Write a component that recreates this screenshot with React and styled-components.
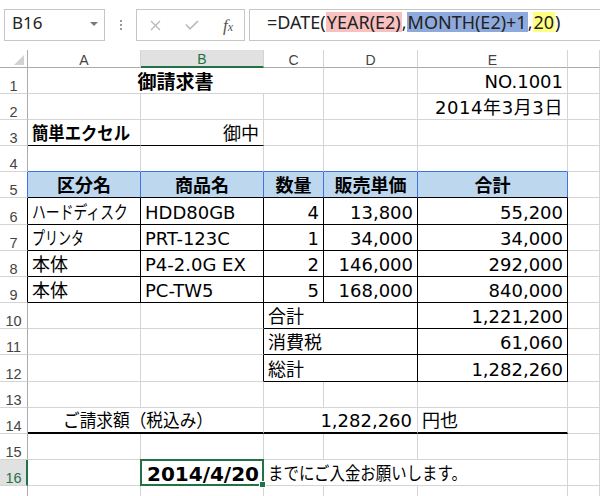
import React, { useLayoutEffect, useRef, useState } from 'react';
import styled, { createGlobalStyle } from 'styled-components';

const GRID = '#d4d4d4';
const BLK = '#000';
const BLUE = '#3f72e6';
const GREEN = '#217346';
const HEADLINE = '#ababab';

const Global = createGlobalStyle`
  html, body { margin: 0; padding: 0; background: #fff; }
  body { width: 600px; height: 496px; overflow: hidden; }
`;

const Page = styled.div`
  width: 600px;
  height: 496px;
  overflow: hidden;
  background: #fff;
`;

const FormulaBar = styled.div`
  display: flex;
  align-items: flex-start;
  height: 50px;
  box-sizing: border-box;
  padding: 9px 0 0 4px;
  font-family: "Noto Sans", sans-serif;
  color: #222;
`;

const NameBox = styled.div`
  width: 101px;
  height: 32px;
  box-sizing: border-box;
  border: 1px solid #c6c6c6;
  display: flex;
  align-items: flex-start;
  justify-content: space-between;
  padding: 2.5px 6px 0 7px;
  font-size: 17px;
  line-height: 20px;
`;

const Caret = styled.span`
  width: 0;
  height: 0;
  margin-top: 9px;
  border-left: 4px solid transparent;
  border-right: 4px solid transparent;
  border-top: 4px solid #7a7a7a;
`;

const Grip = styled.div`
  width: 31px;
  height: 32px;
  display: flex;
  flex-direction: column;
  align-items: center;
  justify-content: center;
  gap: 2px;
`;

const Dot = styled.span`
  width: 2px;
  height: 2px;
  background: #9a9a9a;
`;

const FxBox = styled.div`
  width: 109px;
  height: 32px;
  box-sizing: border-box;
  border: 1px solid #c6c6c6;
  display: flex;
  align-items: center;
  justify-content: space-between;
  padding: 0 11px 0 13px;
`;

const FxText = styled.span`
  font-family: "Liberation Serif", serif;
  font-style: italic;
  font-size: 17px;
  color: #555;
  line-height: 1;
  & > small {
    font-size: 12px;
  }
`;

const FormulaInput = styled.div`
  flex: 1;
  margin-left: 4px;
  height: 32px;
  box-sizing: border-box;
  border: 1px solid #c6c6c6;
  border-right: none;
  padding: 1.5px 0 0 17px;
  font-size: 18px;
  line-height: 20px;
  white-space: nowrap;
`;

const Ref = styled.span`
  display: inline-block;
  line-height: 20px;
  padding: 0 1px;
  background: ${(p) => p.$c};
`;

const Sheet = styled.div`
  display: grid;
  grid-template-columns: 28px 113px 123px 60px 94px 150px 32px;
  grid-template-rows: 17.5px repeat(17, 26.18px);
  font-family: "DejaVu Sans", "Noto Sans CJK JP", sans-serif;
`;

const Corner = styled.div`
  box-sizing: border-box;
  border-right: 1px solid ${HEADLINE};
  border-bottom: 1px solid ${HEADLINE};
  display: flex;
  align-items: flex-end;
  justify-content: flex-end;
  padding: 0 3px 2px 0;
`;

const ColHead = styled.div`
  box-sizing: border-box;
  border-right: 1px solid ${GRID};
  border-bottom: ${(p) => (p.$sel ? `2px solid ${GREEN}` : `1px solid ${HEADLINE}`)};
  background: ${(p) => (p.$sel ? '#e1e1e1' : '#fff')};
  color: ${(p) => (p.$sel ? GREEN : '#444')};
  display: flex;
  align-items: flex-end;
  justify-content: center;
  font-family: "Liberation Sans", sans-serif;
  font-size: 14px;
  line-height: ${(p) => (p.$sel ? 14 : 13)}px;
`;

const RowHead = styled.div`
  box-sizing: border-box;
  border-right: ${(p) => (p.$sel ? `2px solid ${GREEN}` : `1px solid ${p.$rc || HEADLINE}`)};
  border-bottom: 1px solid ${GRID};
  background: ${(p) => (p.$sel ? '#e1e1e1' : '#fff')};
  color: ${(p) => (p.$sel ? GREEN : '#444')};
  display: flex;
  align-items: flex-end;
  justify-content: center;
  padding-left: ${(p) => (p.$sel ? 1 : 0)}px;
  font-family: "Liberation Sans", sans-serif;
  font-size: 14.5px;
  line-height: 13px;
`;

const Cell = styled.div`
  grid-column: span ${(p) => p.$span || 1};
  position: relative;
  box-sizing: border-box;
  border-right: 1px solid ${(p) => p.$r || GRID};
  border-bottom: ${(p) => p.$bw || 1}px solid ${(p) => p.$b || GRID};
  background: ${(p) => p.$bg || '#fff'};
  display: flex;
  align-items: flex-end;
  justify-content: ${(p) => (p.$align === 'right' ? 'flex-end' : p.$align === 'center' ? 'center' : 'flex-start')};
  padding: 0 ${(p) => p.$pr ?? 4}px 0 ${(p) => p.$pl ?? 4}px;
  font-size: ${(p) => p.$fs || 18}px;
  font-weight: ${(p) => (p.$bold ? 700 : 400)};
  line-height: 22px;
  white-space: nowrap;
  color: #000;
`;

const Txt = styled.span`
  display: inline-block;
  flex: none;
  letter-spacing: ${(p) => p.$ls || 0}px;
  transform-origin: left bottom;
`;

const Selection = styled.div`
  position: absolute;
  inset: -1px;
  border: 2px solid ${GREEN};
  pointer-events: none;
  z-index: 2;
`;

const FillHandle = styled.div`
  position: absolute;
  right: -4px;
  bottom: -4px;
  width: 5px;
  height: 5px;
  background: ${GREEN};
  border: 1px solid #fff;
  z-index: 3;
`;

function CellText({ text, fit, ls }) {
  const ref = useRef(null);
  const [scale, setScale] = useState(1);
  useLayoutEffect(() => {
    if (!fit || !ref.current) return;
    const w = ref.current.offsetWidth;
    if (w > 0) setScale(fit / w);
  }, [fit, text]);
  return (
    <Txt
      ref={ref}
      $ls={ls}
      style={fit ? { transform: `scaleX(${scale})` } : undefined}
    >
      {text}
    </Txt>
  );
}

const COLS = ['A', 'B', 'C', 'D', 'E', ''];

const blank = (n) => Array.from({ length: n }, () => ({}));

const dataRow = (a, fit, b, c, d, e) => [
  { text: a, r: BLK, b: BLK, fit },
  { text: b, r: BLK, b: BLK },
  { text: c, r: BLK, b: BLK, align: 'right' },
  { text: d, r: BLK, b: BLK, align: 'right' },
  { text: e, r: BLK, b: BLK, align: 'right' },
  {},
];

const sumRow = (label, value) => [
  {},
  { r: BLK },
  { span: 2, text: label, r: BLK, b: BLK },
  { text: value, r: BLK, b: BLK, align: 'right' },
  {},
];

const ROWS = [
  { cells: [{ span: 3, text: '御請求書', align: 'center', bold: true, fs: 19 }, {}, { text: 'NO.1001', align: 'right' }, {}] },
  { cells: [{}, {}, {}, {}, { text: '2014年3月3日', align: 'right', ls: 0.6 }, {}] },
  {
    cells: [
      { text: '簡単エクセル', bold: true, b: BLK, fit: 98 },
      { text: '御中', align: 'right', b: BLK },
      {}, {}, {}, {},
    ],
  },
  { cells: [{ b: BLUE }, { b: BLUE }, { b: BLUE }, { b: BLUE }, { b: BLUE }, {}] },
  {
    rc: BLUE,
    cells: [
      ...['区分名', '商品名', '数量', '販売単価', '合計'].map((t) => ({
        text: t, bold: true, align: 'center', bg: '#bdd7ee', r: BLUE, b: BLK, pl: 0, pr: 0,
      })),
      {},
    ],
  },
  { rc: BLK, cells: dataRow('ハードディスク', 96, 'HDD80GB', '4', '13,800', '55,200') },
  { rc: BLK, cells: dataRow('プリンタ', 52, 'PRT-123C', '1', '34,000', '34,000') },
  { rc: BLK, cells: dataRow('本体', 0, 'P4-2.0G EX', '2', '146,000', '292,000') },
  { rc: BLK, cells: dataRow('本体', 0, 'PC-TW5', '5', '168,000', '840,000') },
  { cells: sumRow('合計', '1,221,200') },
  { cells: sumRow('消費税', '61,060') },
  { cells: sumRow('総計', '1,282,260') },
  { cells: blank(6) },
  {
    cells: [
      { span: 2, text: 'ご請求額（税込み）', pl: 35, b: BLK, bw: 2, fit: 150 },
      { span: 2, text: '1,282,260', align: 'right', pr: 5, b: BLK, bw: 2 },
      { text: '円也', b: BLK, bw: 2 },
      {},
    ],
  },
  { cells: blank(6) },
  {
    sel: true,
    cells: [
      {},
      { text: '2014/4/20', bold: true, align: 'right', fs: 20, sel: true },
      { span: 3, text: 'までにご入金お願いします。', fit: 199 },
      {},
    ],
  },
  { cells: blank(6) },
];

function XIcon() {
  return (
    <svg width="11" height="11" viewBox="0 0 11 11">
      <path d="M1 1 L10 10 M10 1 L1 10" stroke="#b8b8b8" strokeWidth="1.3" fill="none" />
    </svg>
  );
}

function CheckIcon() {
  return (
    <svg width="14" height="10" viewBox="0 0 14 10">
      <path d="M1 4.5 L5 8.8 L13 1" stroke="#b8b8b8" strokeWidth="1.6" fill="none" />
    </svg>
  );
}

function CornerTriangle() {
  return (
    <svg width="10" height="10" viewBox="0 0 10 10">
      <path d="M10 0 L10 10 L0 10 Z" fill="#d2d2d2" />
    </svg>
  );
}

export default function App() {
  return (
    <Page>
      <Global />
      <FormulaBar>
        <NameBox>
          <span>B16</span>
          <Caret />
        </NameBox>
        <Grip>
          <Dot />
          <Dot />
          <Dot />
        </Grip>
        <FxBox>
          <XIcon />
          <CheckIcon />
          <FxText>
            f<small>x</small>
          </FxText>
        </FxBox>
        <FormulaInput>
          =DATE(<Ref $c="#f9c0c0">YEAR(E2)</Ref>,<Ref $c="#8eaadc">MONTH(E2)+1</Ref>,<Ref $c="#ffff80">20</Ref>)
        </FormulaInput>
      </FormulaBar>
      <Sheet>
        <Corner>
          <CornerTriangle />
        </Corner>
        {COLS.map((c, i) => (
          <ColHead key={i} $sel={c === 'B'}>
            {c}
          </ColHead>
        ))}
        {ROWS.map((row, ri) => (
          <React.Fragment key={ri}>
            <RowHead $rc={row.rc} $sel={row.sel}>
              {ri + 1}
            </RowHead>
            {row.cells.map((c, ci) => (
              <Cell
                key={ci}
                $span={c.span}
                $r={c.r}
                $b={c.b}
                $bw={c.bw}
                $bg={c.bg}
                $align={c.align}
                $bold={c.bold}
                $fs={c.fs}
                $pl={c.pl}
                $pr={c.pr}
              >
                {c.text && <CellText text={c.text} fit={c.fit} ls={c.ls} />}
                {c.sel && (
                  <Selection>
                    <FillHandle />
                  </Selection>
                )}
              </Cell>
            ))}
          </React.Fragment>
        ))}
      </Sheet>
    </Page>
  );
}
